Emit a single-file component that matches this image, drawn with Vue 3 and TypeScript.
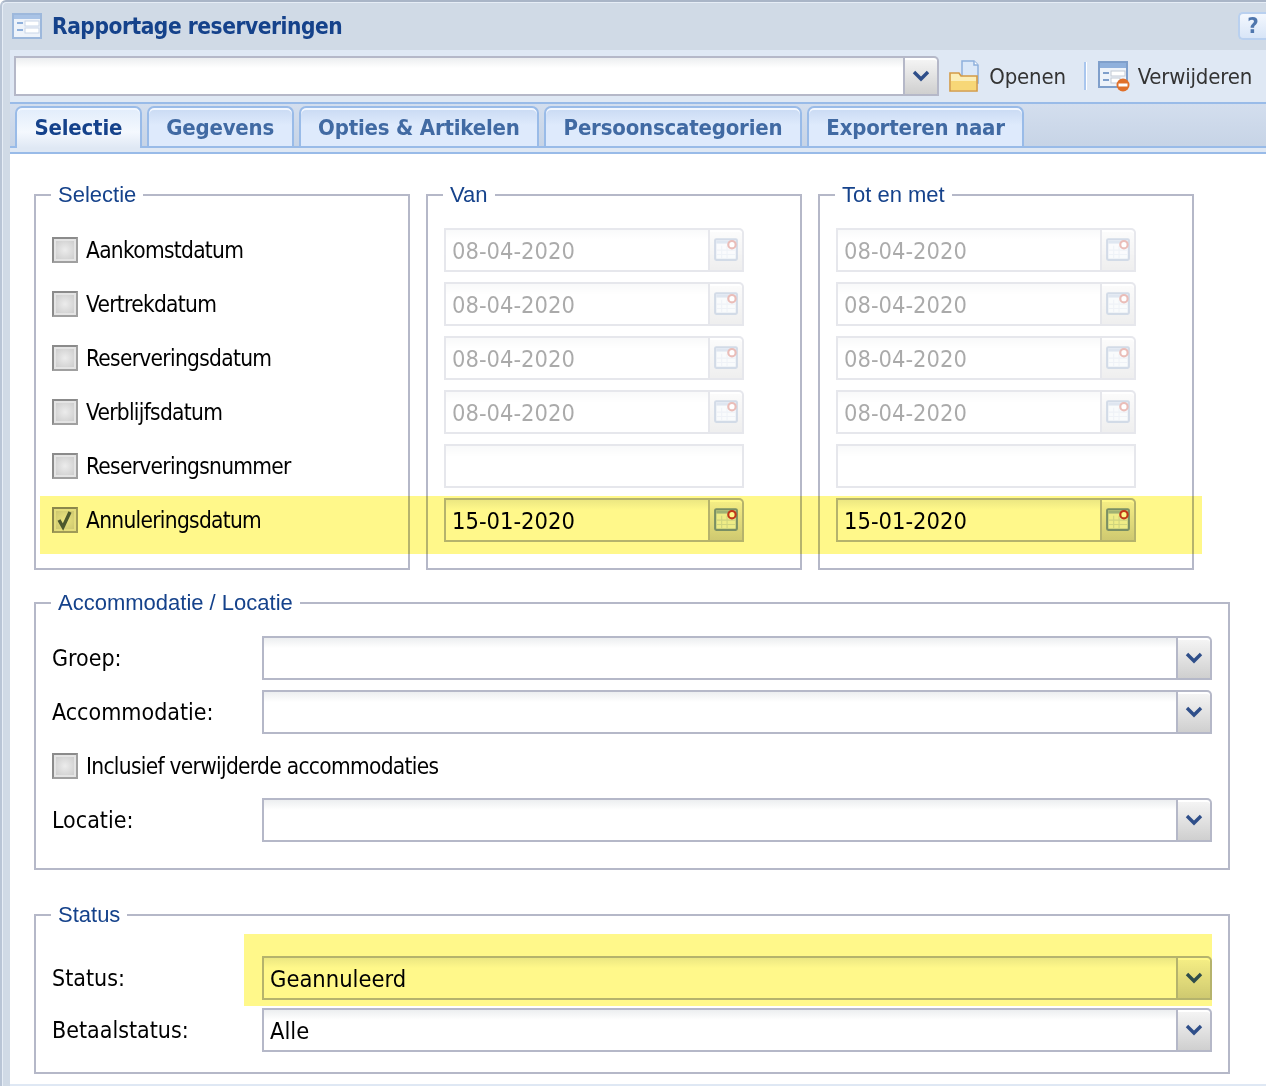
<script setup lang="ts">
const tabs = ['Selectie', 'Gegevens', 'Opties & Artikelen', 'Persoonscategorien', 'Exporteren naar'];

const selectie = [
  { label: 'Aankomstdatum', checked: false },
  { label: 'Vertrekdatum', checked: false },
  { label: 'Reserveringsdatum', checked: false },
  { label: 'Verblijfsdatum', checked: false },
  { label: 'Reserveringsnummer', checked: false },
  { label: 'Annuleringsdatum', checked: true },
];

const dateRows = [
  { value: '08-04-2020', active: false, picker: true },
  { value: '08-04-2020', active: false, picker: true },
  { value: '08-04-2020', active: false, picker: true },
  { value: '08-04-2020', active: false, picker: true },
  { value: '', active: false, picker: false },
  { value: '15-01-2020', active: true, picker: true },
];

const ranges = ['Van', 'Tot en met'];
</script>

<template>
  <div class="window">
    <header class="titlebar">
      <svg class="form-icon" viewBox="0 0 30 26">
        <rect x="1" y="1" width="28" height="24" fill="#eef3fa" stroke="#9db8dc" stroke-width="2" />
        <rect x="2" y="2" width="26" height="4" fill="#a9c3e6" />
        <rect x="5" y="9" width="6" height="2" fill="#8fb0dc" />
        <rect x="5" y="16" width="6" height="2" fill="#8fb0dc" />
        <rect x="13" y="8" width="14" height="5" fill="#fff" stroke="#c9d6e8" />
        <rect x="13" y="15" width="14" height="5" fill="#fff" stroke="#c9d6e8" />
      </svg>
      <h1>Rapportage reserveringen</h1>
      <span class="help">?</span>
    </header>

    <div class="inner">
      <div class="toolbar">
        <div class="combo grow">
          <div class="combo-input"></div>
          <div class="trigger">
            <svg viewBox="0 0 20 12"><path d="M3 2l7 7 7-7" fill="none" stroke="#2f4f8a" stroke-width="3.4" /></svg>
          </div>
        </div>
        <button class="tool first">
          <svg class="tool-icon" viewBox="0 0 30 32">
            <path d="M13 1h12l4 4v18H13z" fill="#dbe8f8" stroke="#8fb0dc" stroke-width="1.5" />
            <path d="M25 1v4h4" fill="#fff" stroke="#8fb0dc" stroke-width="1.5" />
            <path d="M1 13h9l2 3h16v15H1z" fill="#fbeeb8" stroke="#d49a45" stroke-width="1.6" />
            <path d="M2 21h25v9H2z" fill="#f7d777" />
          </svg>
          <span>Openen</span>
        </button>
        <span class="sep"></span>
        <button class="tool second">
          <svg class="tool-icon wide" viewBox="0 0 32 32">
            <rect x="1" y="2" width="28" height="25" fill="#eef3fa" stroke="#7f9fcb" stroke-width="2" />
            <rect x="2" y="3" width="26" height="5" fill="#8fb0dc" />
            <rect x="5" y="12" width="6" height="2" fill="#7f9fcb" />
            <rect x="5" y="19" width="6" height="2" fill="#7f9fcb" />
            <rect x="13" y="11" width="14" height="5" fill="#fff" stroke="#c2c9d4" />
            <rect x="13" y="18" width="9" height="5" fill="#fff" stroke="#c2c9d4" />
            <circle cx="25" cy="25" r="6.5" fill="#e0702a" />
            <rect x="20.5" y="23.5" width="9" height="3" fill="#fff" />
          </svg>
          <span>Verwijderen</span>
        </button>
      </div>

      <nav class="tabs">
        <div v-for="(tab, i) in tabs" :key="tab" class="tab" :class="{ active: i === 0 }">{{ tab }}</div>
      </nav>

      <main class="tab-body">
        <div class="top-row">
          <fieldset class="col">
            <legend>Selectie</legend>
            <div class="rows">
              <label v-for="item in selectie" :key="item.label" class="check-row">
                <span class="check">
                  <svg v-if="item.checked" viewBox="0 0 22 22"><path d="M5 11l4 7 7-15" fill="none" stroke="#4d5a52" stroke-width="3.4" /></svg>
                </span>
                {{ item.label }}
              </label>
            </div>
          </fieldset>

          <fieldset v-for="range in ranges" :key="range" class="col">
            <legend>{{ range }}</legend>
            <div class="rows">
              <div
                v-for="(row, i) in dateRows"
                :key="i"
                class="combo date"
                :class="{ disabled: !row.active }"
              >
                <div class="combo-input">{{ row.value }}</div>
                <div v-if="row.picker" class="trigger cal">
                  <svg viewBox="0 0 24 24">
                    <rect x="2" y="3" width="20" height="19" rx="1" fill="#eef3f8" stroke="#7a93b8" stroke-width="2" />
                    <rect x="3" y="4" width="18" height="3" fill="#9fb6d4" />
                    <path d="M8 9v12M13 9v12M3 13h18M3 17h18" stroke="#cfdae8" stroke-width="1" />
                    <circle cx="17.5" cy="8" r="3.4" fill="#fff" stroke="#c0392b" stroke-width="2" />
                  </svg>
                </div>
              </div>
            </div>
          </fieldset>
        </div>

        <fieldset class="accommodatie">
          <legend>Accommodatie / Locatie</legend>
          <div class="rows">
            <div class="form-row">
              <span class="form-label">Groep:</span>
              <div class="combo grow">
                <div class="combo-input"></div>
                <div class="trigger"><svg viewBox="0 0 20 12"><path d="M3 2l7 7 7-7" fill="none" stroke="#2f4f8a" stroke-width="3.4" /></svg></div>
              </div>
            </div>
            <div class="form-row">
              <span class="form-label">Accommodatie:</span>
              <div class="combo grow">
                <div class="combo-input"></div>
                <div class="trigger"><svg viewBox="0 0 20 12"><path d="M3 2l7 7 7-7" fill="none" stroke="#2f4f8a" stroke-width="3.4" /></svg></div>
              </div>
            </div>
            <label class="check-row">
              <span class="check"></span>
              Inclusief verwijderde accommodaties
            </label>
            <div class="form-row">
              <span class="form-label">Locatie:</span>
              <div class="combo grow">
                <div class="combo-input"></div>
                <div class="trigger"><svg viewBox="0 0 20 12"><path d="M3 2l7 7 7-7" fill="none" stroke="#2f4f8a" stroke-width="3.4" /></svg></div>
              </div>
            </div>
          </div>
        </fieldset>

        <fieldset class="status">
          <legend>Status</legend>
          <div class="rows tight">
            <div class="form-row">
              <span class="form-label">Status:</span>
              <div class="combo grow">
                <div class="combo-input">Geannuleerd</div>
                <div class="trigger"><svg viewBox="0 0 20 12"><path d="M3 2l7 7 7-7" fill="none" stroke="#2f4f8a" stroke-width="3.4" /></svg></div>
              </div>
            </div>
            <div class="form-row">
              <span class="form-label">Betaalstatus:</span>
              <div class="combo grow">
                <div class="combo-input">Alle</div>
                <div class="trigger"><svg viewBox="0 0 20 12"><path d="M3 2l7 7 7-7" fill="none" stroke="#2f4f8a" stroke-width="3.4" /></svg></div>
              </div>
            </div>
          </div>
        </fieldset>

        <div class="marker marker-dates"></div>
        <div class="marker marker-status"></div>
      </main>
    </div>
  </div>
</template>

<style scoped>
.window {
  height: 1084px;
  overflow: hidden;
  border-top: 2px solid #a9b5c7;
  border-left: 2px solid #b9c5d6;
  border-top-left-radius: 6px;
  box-shadow: inset 1px 1px 0 #e6edf6;
  background: #d0dae6;
  font-family: "DejaVu Sans Condensed", "DejaVu Sans", sans-serif;
  font-stretch: condensed;
  color: #000;
}
.titlebar {
  height: 48px;
  display: flex;
  align-items: center;
  padding-left: 10px;
}
.form-icon {
  width: 30px;
  height: 26px;
  margin-right: 10px;
}
h1 {
  margin: 0;
  font-size: 22.5px;
  letter-spacing: -0.45px;
  font-weight: 700;
  color: #15428b;
}
.help {
  margin-left: auto;
  width: 28px;
  height: 28px;
  box-sizing: border-box;
  border: 2px solid #b9d0ef;
  border-right: none;
  border-radius: 5px 0 0 5px;
  background: linear-gradient(#f4f8fe, #d8e5f7);
  color: #4f76ad;
  font-weight: 700;
  font-size: 22px;
  line-height: 24px;
  text-align: center;
}
.inner {
  margin-left: 8px;
  height: 1036px;
  background: #dfe8f4;
}
.toolbar {
  height: 54px;
  box-sizing: border-box;
  display: flex;
  align-items: center;
  padding: 0 14px 0 4px;
  background: #dfe8f4;
  border-bottom: 2px solid #99bbe8;
}
.toolbar .combo {
  height: 40px;
}
.tool {
  display: flex;
  align-items: center;
  gap: 10px;
  padding: 0;
  border: none;
  background: none;
  font: inherit;
  font-size: 22px;
  letter-spacing: -0.2px;
  color: #333;
}
.tool.first {
  margin-left: 10px;
}
.tool.second {
  gap: 8px;
}
.tool-icon {
  width: 30px;
  height: 32px;
}
.tool-icon.wide {
  width: 32px;
}
.sep {
  width: 3px;
  height: 28px;
  margin: 0 11px 0 18px;
  background: linear-gradient(90deg, #a9c6ee 50%, #fff 50%);
}
.tabs {
  height: 44px;
  box-sizing: border-box;
  display: flex;
  gap: 5px;
  align-items: flex-end;
  padding-left: 5px;
  background: linear-gradient(#d3deee, #c7d4e6);
  border-bottom: 2px solid #99bbe8;
}
.tab {
  height: 40px;
  box-sizing: border-box;
  padding: 0 17.5px;
  border: 2px solid #99bbe8;
  border-bottom: none;
  border-radius: 7px 7px 0 0;
  background: linear-gradient(#c9daf3, #deeafc 45%);
  box-shadow: inset 0 2px 0 #f2f7ff;
  color: #416aa3;
  font-weight: 700;
  font-size: 22px;
  letter-spacing: -0.2px;
  line-height: 40px;
}
.tab.active {
  height: 42px;
  margin-bottom: -2px;
  background: linear-gradient(#e1ecfb, #f4f8fe 60%, #dfe8f4);
  color: #15428b;
}
.tab-body {
  position: relative;
  height: 932px;
  box-sizing: border-box;
  padding: 28px 0 0 24px;
  border-top: 2px solid #99bbe8;
  margin-top: 4px;
  background: #fff;
}
.top-row {
  display: flex;
  gap: 16px;
}
fieldset {
  margin: 0;
  padding: 20px 16px 26px;
  border: 2px solid #b5b8c8;
  min-width: 0;
  box-sizing: border-box;
}
legend {
  margin-left: -1px;
  padding: 0 7px;
  font-family: "Liberation Sans", sans-serif;
  font-stretch: normal;
  font-size: 22px;
  line-height: 26px;
  color: #15428b;
}
.col {
  width: 376px;
}
.accommodatie {
  width: 1196px;
  margin-top: 20px;
}
.status {
  width: 1196px;
  margin-top: 32px;
  padding-top: 28px;
  padding-bottom: 20px;
}
.rows {
  display: flex;
  flex-direction: column;
  gap: 10px;
}
.rows.tight {
  gap: 8px;
}
.check-row {
  height: 44px;
  display: flex;
  align-items: center;
  gap: 8px;
  font-size: 22.5px;
  letter-spacing: -0.7px;
}
.check {
  width: 26px;
  height: 26px;
  box-sizing: border-box;
  flex: none;
  border: 2px solid #8b8b8b;
  border-right-color: #a0a0a0;
  border-bottom-color: #a0a0a0;
  background: radial-gradient(#ececec, #c6c6c6);
  box-shadow: inset 0 0 0 2px #e4e4e4;
}
.check svg {
  display: block;
  width: 22px;
  height: 22px;
}
.form-row {
  display: flex;
  align-items: center;
}
.form-label {
  width: 210px;
  flex: none;
  font-size: 23px;
}
.combo {
  display: flex;
  height: 44px;
  font-size: 23.5px;
}
.grow {
  flex: 1;
}
.date {
  width: 300px;
}
.combo-input {
  flex: 1;
  min-width: 0;
  box-sizing: border-box;
  padding-left: 6px;
  border: 2px solid #b5b8c8;
  background: linear-gradient(#eceef0, #fff 10px);
  line-height: 42px;
}
.trigger {
  width: 34px;
  flex: none;
  box-sizing: border-box;
  display: flex;
  align-items: center;
  justify-content: center;
  border: 2px solid #b5b8c8;
  border-left: none;
  border-radius: 0 5px 0 0;
  background: linear-gradient(#f6f6f6, #cfcfcf);
  box-shadow: inset 0 2px 0 #fff;
}
.trigger svg {
  width: 20px;
  height: 12px;
}
.trigger.cal svg {
  width: 26px;
  height: 26px;
  margin-top: -3px;
}
.disabled {
  opacity: 0.33;
}
.marker {
  position: absolute;
  background: #fff88a;
  mix-blend-mode: multiply;
  pointer-events: none;
}
.marker-dates {
  left: 30px;
  top: 342px;
  width: 1162px;
  height: 58px;
}
.marker-status {
  left: 234px;
  top: 780px;
  width: 968px;
  height: 72px;
}
</style>
<style>
body {
  background: #fff;
}
</style>
